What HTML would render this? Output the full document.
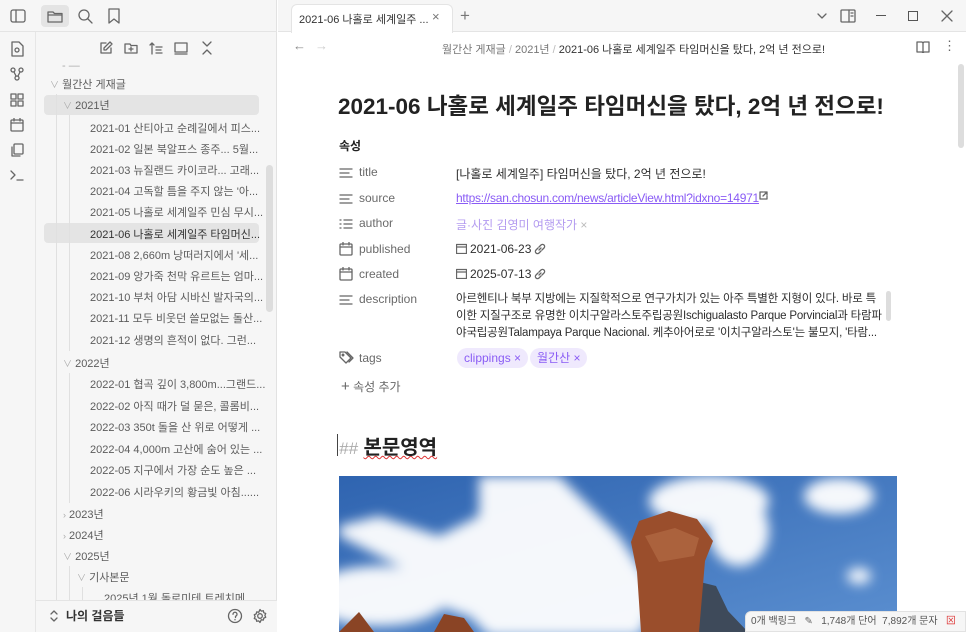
<!DOCTYPE html>
<html><head><meta charset="utf-8"><style>
*{margin:0;padding:0;box-sizing:border-box}
body{width:966px;height:632px;overflow:hidden;background:#fff;font-family:"Liberation Sans","Noto Sans CJK KR",sans-serif;color:#222;position:relative}
.a{position:absolute;white-space:nowrap}
.side{left:0;top:0;width:277px;height:632px;background:#f6f6f6;border-right:1px solid #e2e2e2}
.rib{left:0;top:32px;width:36px;height:600px;border-right:1px solid #e6e6e6}
.fi{font-size:11px;color:#5c5c5c}
.pk{font-size:12px;color:#6a6a6a}
.pv{font-size:12px;color:#2e2e2e}
svg{position:absolute}
svg.in{position:static;vertical-align:top}
.ic{stroke:#666;fill:none;stroke-width:1.3;stroke-linecap:round;stroke-linejoin:round}
</style></head><body>
<div class="a side"></div>
<div class="a rib"></div>
<div class="a" style="left:0;top:31px;width:277px;height:1px;background:#e4e4e4"></div>
<svg width="16" height="14" style="left:10px;top:9px" class="ic"><rect x="1" y="1" width="14" height="12" rx="2"/><line x1="6" y1="1" x2="6" y2="13"/></svg>
<div class="a" style="left:41px;top:5px;width:28px;height:22px;background:#e4e4e4;border-radius:4px"></div>
<svg width="16" height="14" style="left:47px;top:9px" class="ic"><path d="M1 3h5l1.5 1.5H15V13H1z M1 6h14"/></svg>
<svg width="16" height="16" style="left:77px;top:8px" class="ic"><circle cx="7" cy="7" r="5"/><line x1="11" y1="11" x2="15" y2="15"/></svg>
<svg width="14" height="16" style="left:107px;top:8px" class="ic"><path d="M2 1h10v14l-5-4-5 4z"/></svg>
<svg width="14" height="16" style="left:10px;top:41px" class="ic"><path d="M2 1h7l4 4v10H2z"/><circle cx="7" cy="9" r="2"/></svg>
<svg width="14" height="14" style="left:10px;top:67px" class="ic"><circle cx="3" cy="3" r="2"/><circle cx="11" cy="3" r="2"/><circle cx="7" cy="11" r="2"/><path d="M4 5l2 4M10 5l-2 4"/></svg>
<svg width="14" height="14" style="left:10px;top:93px" class="ic"><rect x="1" y="1" width="5" height="5"/><rect x="8" y="1" width="5" height="5"/><rect x="1" y="8" width="5" height="5"/><rect x="8" y="8" width="5" height="5"/></svg>
<svg width="14" height="14" style="left:10px;top:118px" class="ic"><rect x="1" y="2" width="12" height="11" rx="1"/><path d="M1 5h12M4 0v3M10 0v3"/></svg>
<svg width="14" height="14" style="left:10px;top:143px" class="ic"><rect x="4" y="1" width="9" height="10" rx="1"/><path d="M2 4v9h8"/></svg>
<svg width="14" height="12" style="left:10px;top:169px" class="ic"><path d="M1 2l4 4-4 4M7 11h6"/></svg>
<svg width="14" height="14" style="left:99px;top:41px" class="ic"><path d="M7 2H2v10h10V7M11 1l2 2-6 6H5V7z"/></svg>
<svg width="14" height="14" style="left:124px;top:41px" class="ic"><path d="M1 3h5l1 1.5h6V12H1z M7 6v4M5 8h4"/></svg>
<svg width="14" height="14" style="left:149px;top:41px" class="ic"><path d="M3 13V2M1 4l2-2 2 2M7 6h6M7 9h5M7 12h6"/></svg>
<svg width="14" height="14" style="left:174px;top:41px" class="ic"><rect x="1" y="2" width="12" height="9"/><path d="M1 13h12"/></svg>
<svg width="12" height="14" style="left:201px;top:41px" class="ic"><path d="M2 1l4 4 4-4M2 13l4-4 4 4"/></svg>
<div class="a" style="left:44px;top:95px;width:215px;height:20px;background:#e4e4e4;border-radius:4px"></div>
<div class="a" style="left:44px;top:223px;width:215px;height:20px;background:#e4e4e4;border-radius:4px"></div>
<div class="a" style="left:56px;top:94px;width:1px;height:506px;background:#e0e0e0"></div>
<div class="a" style="left:69px;top:115px;width:1px;height:236px;background:#e0e0e0"></div>
<div class="a" style="left:69px;top:373px;width:1px;height:130px;background:#e0e0e0"></div>
<div class="a" style="left:69px;top:566px;width:1px;height:34px;background:#e0e0e0"></div>
<div class="a" style="left:82px;top:587px;width:1px;height:13px;background:#e0e0e0"></div>
<div class="a" style="left:266px;top:165px;width:7px;height:147px;background:#ddd;border-radius:4px"></div>
<div class="a fi" style="left:62px;top:60px;color:#aaa">- —</div>
<div class="a fi" style="left:50px;top:76px"><span style="color:#aaa;font-size:9px">∨</span> 월간산 게재글</div>
<div class="a fi" style="left:63px;top:97px"><span style="color:#aaa;font-size:9px">∨</span> 2021년</div>
<div class="a fi" style="left:90px;top:120px">2021-01 산티아고 순례길에서 피스...</div>
<div class="a fi" style="left:90px;top:141px">2021-02 일본 북알프스 종주... 5월...</div>
<div class="a fi" style="left:90px;top:162px">2021-03 뉴질랜드 카이코라... 고래...</div>
<div class="a fi" style="left:90px;top:183px">2021-04 고독할 틈을 주지 않는 '아...</div>
<div class="a fi" style="left:90px;top:204px">2021-05 나홀로 세계일주 민심 무시...</div>
<div class="a fi" style="left:90px;top:226px;color:#333">2021-06 나홀로 세계일주 타임머신...</div>
<div class="a fi" style="left:90px;top:247px">2021-08 2,660m 낭떠러지에서 '세...</div>
<div class="a fi" style="left:90px;top:268px">2021-09 앙가죽 천막 유르트는 엄마...</div>
<div class="a fi" style="left:90px;top:289px">2021-10 부처 아담 시바신 발자국의...</div>
<div class="a fi" style="left:90px;top:310px">2021-11 모두 비웃던 쓸모없는 돌산...</div>
<div class="a fi" style="left:90px;top:332px">2021-12 생명의 흔적이 없다. 그런...</div>
<div class="a fi" style="left:63px;top:355px"><span style="color:#aaa;font-size:9px">∨</span> 2022년</div>
<div class="a fi" style="left:90px;top:376px">2022-01 협곡 깊이 3,800m...그랜드...</div>
<div class="a fi" style="left:90px;top:398px">2022-02 아직 때가 덜 묻은, 콜롬비...</div>
<div class="a fi" style="left:90px;top:419px">2022-03 350t 돌을 산 위로 어떻게 ...</div>
<div class="a fi" style="left:90px;top:441px">2022-04 4,000m 고산에 숨어 있는 ...</div>
<div class="a fi" style="left:90px;top:462px">2022-05 지구에서 가장 순도 높은 ...</div>
<div class="a fi" style="left:90px;top:484px">2022-06 시라우키의 황금빛 아침......</div>
<div class="a fi" style="left:63px;top:506px"><span style="color:#aaa;font-size:9px">›</span> 2023년</div>
<div class="a fi" style="left:63px;top:527px"><span style="color:#aaa;font-size:9px">›</span> 2024년</div>
<div class="a fi" style="left:63px;top:548px"><span style="color:#aaa;font-size:9px">∨</span> 2025년</div>
<div class="a fi" style="left:77px;top:569px"><span style="color:#aaa;font-size:9px">∨</span> 기사본문</div>
<div class="a fi" style="left:104px;top:590px">2025년 1월 돌로미테 트레치메</div>
<div class="a" style="left:36px;top:600px;width:241px;height:32px;background:#f6f6f6;border-top:1px solid #e4e4e4"></div>
<svg width="8" height="12" style="left:50px;top:610px" class="ic" stroke-width="1"><path d="M1 4l3-3 3 3M1 8l3 3 3-3"/></svg>
<div class="a" style="left:66px;top:607px;font-size:12px;color:#333;font-weight:bold">나의 걸음들</div>
<svg width="16" height="16" style="left:227px;top:608px" class="ic"><circle cx="8" cy="8" r="6.5"/><path d="M6 6.3a2 2 0 1 1 2.5 1.9V9.5M8 11.5v.3"/></svg>
<svg width="16" height="16" style="left:252px;top:608px" class="ic"><circle cx="8" cy="8" r="2.3"/><path d="M8 1.5l1.3 1.6 2-.4.5 2 1.9.8-.8 1.9.8 1.9-1.9.8-.5 2-2-.4L8 14.5l-1.3-1.6-2 .4-.5-2-1.9-.8.8-1.9-.8-1.9 1.9-.8.5-2 2 .4z"/></svg>
<div class="a" style="left:278px;top:0;width:688px;height:32px;background:#f6f6f6;border-bottom:1px solid #e4e4e4"></div>
<div class="a" style="left:291px;top:4px;width:162px;height:29px;background:#fff;border-radius:6px 6px 0 0;border:1px solid #e4e4e4;border-bottom:none"></div>
<div class="a" style="left:299px;top:11px;font-size:11px;color:#333">2021-06 나홀로 세계일주 ...</div>
<div class="a" style="left:432px;top:9px;font-size:13px;color:#777">×</div>
<div class="a" style="left:460px;top:6px;font-size:17px;color:#777">+</div>
<svg width="10" height="8" style="left:817px;top:13px" class="ic"><path d="M1 1l4 4 4-4"/></svg>
<svg width="16" height="14" style="left:840px;top:9px" class="ic"><rect x="1" y="1" width="14" height="12" rx="1"/><path d="M9 1v12M11 4h2M11 7h2"/></svg>
<div class="a" style="left:876px;top:15px;width:10px;height:1px;background:#555"></div>
<div class="a" style="left:908px;top:11px;width:10px;height:10px;border:1px solid #555"></div>
<svg width="12" height="12" style="left:941px;top:10px" class="ic" stroke="#444"><path d="M1 1l10 10M11 1L1 11"/></svg>
<div class="a" style="left:293px;top:38px;font-size:13px;color:#888">←</div>
<div class="a" style="left:315px;top:38px;font-size:13px;color:#ccc">→</div>
<div class="a" style="left:442px;top:41px;font-size:11px;color:#777">월간산 게재글 <span style="color:#bbb">/</span> 2021년 <span style="color:#bbb">/</span> <span style="color:#333">2021-06 나홀로 세계일주 타임머신을 탔다, 2억 년 전으로!</span></div>
<svg width="14" height="12" style="left:916px;top:41px" class="ic"><path d="M1 1h5l1 1 1-1h5v10H8l-1 1-1-1H1zM7 2v9"/></svg>
<div class="a" style="left:943px;top:38px;font-size:13px;color:#666">⋮</div>
<div class="a" style="left:958px;top:64px;width:6px;height:84px;background:#ddd;border-radius:3px"></div>
<div class="a" style="left:338px;top:89px;font-size:22.5px;font-weight:bold;color:#222">2021-06 나홀로 세계일주 타임머신을 탔다, 2억 년 전으로!</div>
<div class="a" style="left:339px;top:137px;font-size:12px;font-weight:bold;color:#222">속성</div>
<svg width="14" height="12" style="left:339px;top:167px" class="ic"><path d="M1 2h12M1 6h9M1 10h12"/></svg>
<svg width="14" height="12" style="left:339px;top:193px" class="ic"><path d="M1 2h12M1 6h9M1 10h12"/></svg>
<svg width="14" height="12" style="left:339px;top:218px" class="ic"><path d="M1 2h1M5 2h8M1 6h1M5 6h8M1 10h1M5 10h8"/></svg>
<svg width="14" height="14" style="left:339px;top:242px" class="ic"><rect x="1" y="2" width="12" height="11" rx="1"/><path d="M1 5h12M4 0v3M10 0v3"/></svg>
<svg width="14" height="14" style="left:339px;top:267px" class="ic"><rect x="1" y="2" width="12" height="11" rx="1"/><path d="M1 5h12M4 0v3M10 0v3"/></svg>
<svg width="14" height="12" style="left:339px;top:294px" class="ic"><path d="M1 2h12M1 6h9M1 10h12"/></svg>
<svg width="15" height="13" style="left:339px;top:351px" class="ic"><path d="M1 1h5l6 6-5 5-6-6zM8 1l6 6-4 4"/><circle cx="4" cy="4" r=".8"/></svg>
<div class="a pk" style="left:359px;top:165px">title</div>
<div class="a pk" style="left:359px;top:191px">source</div>
<div class="a pk" style="left:359px;top:216px">author</div>
<div class="a pk" style="left:359px;top:242px">published</div>
<div class="a pk" style="left:359px;top:267px">created</div>
<div class="a pk" style="left:359px;top:292px">description</div>
<div class="a pk" style="left:359px;top:351px">tags</div>
<div class="a pk" style="left:341px;top:378px;color:#666"><span style="font-size:15px">+</span> 속성 추가</div>
<div class="a pv" style="left:456px;top:165px">[나홀로 세계일주] 타임머신을 탔다, 2억 년 전으로!</div>
<div class="a pv" style="left:456px;top:191px;color:#8a5cf5"><span style="text-decoration:underline;letter-spacing:-0.25px">https://san.chosun.com/news/articleView.html?idxno=14971</span><svg class="in ic" width="9" height="9" stroke="#888" stroke-width="1"><path d="M4 1H1v7h7V5M5 1h3v3M8 1L4 5"/></svg></div>
<div class="a pv" style="left:456px;top:216px;color:#b49cf0">글·사진 김영미 여행작가 <span style="color:#bbb">×</span></div>
<svg width="11" height="11" style="left:456px;top:243px" class="ic" stroke="#444" stroke-width="1"><rect x=".5" y="1.5" width="10" height="9"/><path d="M.5 4h10"/></svg>
<div class="a pv" style="left:470px;top:242px">2021-06-23</div>
<svg width="12" height="12" style="left:534px;top:243px" class="ic" stroke="#999" stroke-width="1"><path d="M5 7l2-2M4 5L2 7a2 2 0 0 0 3 3l2-2M8 7l2-2a2 2 0 0 0-3-3L5 4"/></svg>
<svg width="11" height="11" style="left:456px;top:268px" class="ic" stroke="#444" stroke-width="1"><rect x=".5" y="1.5" width="10" height="9"/><path d="M.5 4h10"/></svg>
<div class="a pv" style="left:470px;top:267px">2025-07-13</div>
<svg width="12" height="12" style="left:534px;top:268px" class="ic" stroke="#999" stroke-width="1"><path d="M5 7l2-2M4 5L2 7a2 2 0 0 0 3 3l2-2M8 7l2-2a2 2 0 0 0-3-3L5 4"/></svg>
<div class="a pv" style="left:456px;top:291px;font-size:11.5px;line-height:17px;letter-spacing:-0.2px">아르헨티나 북부 지방에는 지질학적으로 연구가치가 있는 아주 특별한 지형이 있다. 바로 특<br>이한 지질구조로 유명한 이치구알라스토주립공원Ischigualasto Parque Porvincial과 타람파<br>야국립공원Talampaya Parque Nacional. 케추아어로로 '이치구알라스토'는 불모지, '타람...</div>
<div class="a" style="left:886px;top:291px;width:5px;height:30px;background:#ddd;border-radius:3px"></div>
<div class="a" style="left:457px;top:348px;height:20px;padding:0 7px;border-radius:10px;background:#efe9fd;color:#8a5cf5;font-size:12px;line-height:20px">clippings ×</div>
<div class="a" style="left:530px;top:348px;height:20px;padding:0 7px;border-radius:10px;background:#efe9fd;color:#8a5cf5;font-size:12px;line-height:20px">월간산 ×</div>
<div class="a" style="left:337px;top:434px;width:1px;height:22px;background:#444"></div>
<div class="a" style="left:339px;top:431px;font-size:20px;font-weight:bold;color:#222"><span style="color:#aaa;font-weight:normal;font-style:italic;font-size:17px">##</span> <span style="text-decoration:underline wavy #d33;text-decoration-thickness:1px">본문영역</span></div>
<svg width="558" height="156" style="left:339px;top:476px" viewBox="0 0 558 156">
<defs><linearGradient id="sky" x1="0" y1="0" x2="1" y2="1"><stop offset="0" stop-color="#2f64b0"/><stop offset="1" stop-color="#5b8fd0"/></linearGradient>
<filter id="bl"><feGaussianBlur stdDeviation="6"/></filter></defs>
<rect width="558" height="156" fill="url(#sky)"/>
<g fill="#fff" filter="url(#bl)" opacity=".95">
<path d="M140 0h80l60 60 40 60-20 40H150l-40-40-50-30L0 60v96H0V50l40-10 60 20 40-20z"/>
<ellipse cx="40" cy="120" rx="70" ry="30"/>
<ellipse cx="170" cy="100" rx="90" ry="45"/>
<ellipse cx="250" cy="120" rx="70" ry="30"/>
<ellipse cx="370" cy="25" rx="60" ry="25"/>
<ellipse cx="400" cy="55" rx="30" ry="35"/>
<ellipse cx="500" cy="20" rx="35" ry="18"/>
<ellipse cx="520" cy="100" rx="12" ry="8"/>
</g>
<path d="M345 130l12-25 20 5 12 25 20 21h-70z" fill="#3e4a5a"/>
<path d="M300 45l30-10 28 8 16 22-8 20-6 71h-58l-4-60-6-30z" fill="#9a4e2c"/>
<path d="M306 60l30-8 24 10-5 18-35 6z" fill="#b8704a" opacity=".6"/>
<path d="M0 156l20-20 15 20z M95 156l10-18 20 4 10 14z" fill="#8a4425"/>
</svg>
<div class="a" style="left:745px;top:611px;width:221px;height:21px;background:#f6f6f6;border:1px solid #e2e2e2;border-radius:6px 0 0 0;font-size:10px;color:#555;line-height:19px;padding-left:5px">0개 백링크 &nbsp; <span style="color:#666">✎</span> &nbsp; 1,748개 단어 &nbsp;7,892개 문자 &nbsp; <span style="color:#d33">⊠</span></div>
</body></html>
